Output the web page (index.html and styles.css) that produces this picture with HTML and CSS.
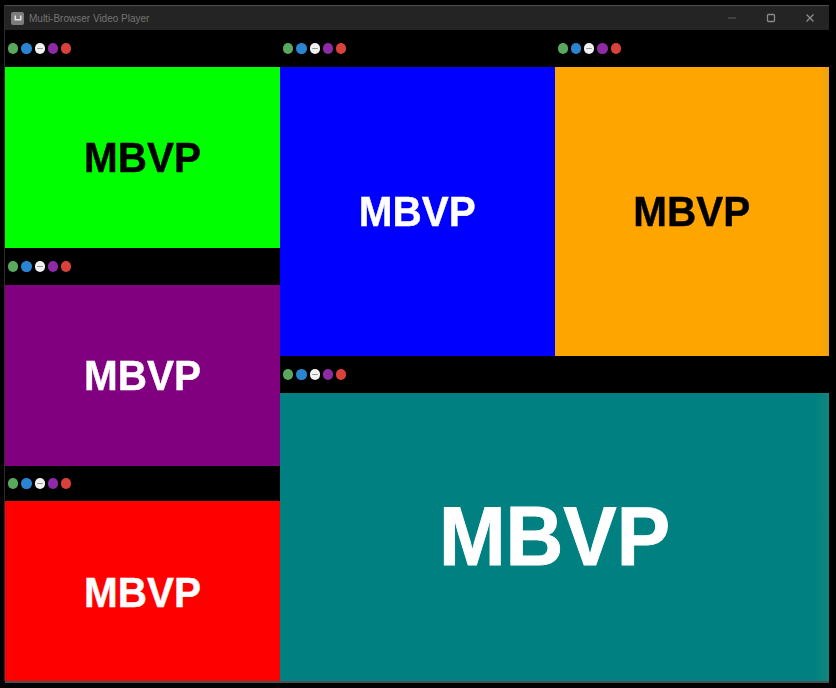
FILE: index.html
```html
<!DOCTYPE html>
<html lang="en">
<head>
<meta charset="utf-8">
<title>Multi-Browser Video Player</title>
<link rel="stylesheet" href="styles.css">
</head>
<body>
<div class="window">
  <header class="titlebar">
    <span class="app-icon"><svg width="12" height="12" viewBox="0 0 12 12"><path d="M2.500 3.500v5h7v-5H8v3.500H4V3.500z" fill="#e4e4e4"/></svg></span>
    <span class="app-title">Multi-Browser Video Player</span>
    <div class="win-controls">
      <svg class="win-btn" width="10" height="10" viewBox="0 0 10 10"><path d="M1 5h8" stroke="#5f5f5f" fill="none"/></svg>
      <svg class="win-btn" width="10" height="10" viewBox="0 0 10 10"><rect x="1.500" y="1.500" width="7" height="7" rx="1" stroke="#8a8a8a" stroke-width="1.300" fill="none"/></svg>
      <svg class="win-btn" width="10" height="10" viewBox="0 0 10 10"><path d="M1.500 1.500l7 7M8.500 1.500l-7 7" stroke="#8a8a8a" stroke-width="1.400" fill="none"/></svg>
    </div>
  </header>
  <main class="workspace">
    <section class="column-left">
      <article class="panel panel-a">
        <div class="bar"><i class="dot green"></i><i class="dot blue"></i><i class="dot white"></i><i class="dot purple"></i><i class="dot red"></i></div>
        <div class="video bg-green"><span class="logo dark">MBVP</span></div>
      </article>
      <article class="panel panel-a">
        <div class="bar"><i class="dot green"></i><i class="dot blue"></i><i class="dot white"></i><i class="dot purple"></i><i class="dot red"></i></div>
        <div class="video bg-purple"><span class="logo">MBVP</span></div>
      </article>
      <article class="panel panel-b">
        <div class="bar bar-short"><i class="dot green"></i><i class="dot blue"></i><i class="dot white"></i><i class="dot purple"></i><i class="dot red"></i></div>
        <div class="video bg-red"><span class="logo">MBVP</span></div>
      </article>
    </section>
    <section class="column-right">
      <div class="top-row">
        <article class="panel panel-half">
          <div class="bar"><i class="dot green"></i><i class="dot blue"></i><i class="dot white"></i><i class="dot purple"></i><i class="dot red"></i></div>
          <div class="video bg-blue"><span class="logo">MBVP</span></div>
        </article>
        <article class="panel panel-half">
          <div class="bar"><i class="dot green"></i><i class="dot blue"></i><i class="dot white"></i><i class="dot purple"></i><i class="dot red"></i></div>
          <div class="video bg-orange"><span class="logo dark">MBVP</span></div>
        </article>
      </div>
      <article class="panel panel-wide">
        <div class="bar"><i class="dot green"></i><i class="dot blue"></i><i class="dot white"></i><i class="dot purple"></i><i class="dot red"></i></div>
        <div class="video bg-teal"><span class="logo logo-large">MBVP</span></div>
      </article>
    </section>
  </main>
</div>
</body>
</html>
```
FILE: styles.css
```css
* { box-sizing: border-box; }
html, body { margin: 0; height: 100%; background: #000; overflow: hidden; }
body { padding: 5px 7px 4px 5px; font-family: "Liberation Sans", Arial, sans-serif; }

.window {
  width: 824px;
  height: 676px;
  display: flex;
  flex-direction: column;
  background: #000;
  filter: blur(0.6px);
  box-shadow: 0 2px 0 #4a4f50, -1px 0 0 #2c2c2c;
}

.titlebar {
  height: 25px;
  flex: none;
  display: flex;
  align-items: center;
  padding-left: 6px;
  background: #242424;
  border-top: 1px solid #4e4e4e;
}
.app-icon {
  width: 13px;
  height: 13px;
  display: flex;
  align-items: center;
  justify-content: center;
  background: #7c7c7c;
  border-radius: 2px;
}
.app-title { margin-left: 5px; font-size: 10px; color: #747474; }
.win-controls { margin-left: auto; display: flex; gap: 29px; padding-right: 14px; }

.workspace { flex: 1; min-height: 0; display: flex; }
.column-left { width: 275px; flex: none; display: flex; flex-direction: column; }
.column-right { flex: 1; min-width: 0; display: flex; flex-direction: column; }
.top-row { height: 326px; flex: none; display: flex; }

.panel { display: flex; flex-direction: column; min-width: 0; }
.panel-a { height: 218px; flex: none; }
.panel-b { height: 215px; flex: none; }
.panel-half { width: 50%; }
.panel-wide { height: 325px; flex: none; }

.bar {
  height: 37px;
  flex: none;
  display: flex;
  align-items: center;
  gap: 3px;
  padding: 0 3px;
  background: #000;
}
.bar-short { height: 35px; }

.dot { position: relative; width: 10.3px; height: 10.3px; border-radius: 50%; flex: none; }
.green { background: #59a85d; }
.blue { background: #2a84d2; }
.white { background: #f2f2f2; }
.white::after { content: ""; position: absolute; left: 2px; right: 2px; top: 4.500px; height: 1.500px; background: #999; border-radius: 1px; }
.purple { background: #8e2aa6; }
.red { background: #d9423a; }

.video { flex: 1; min-height: 0; display: flex; align-items: center; justify-content: center; }
.bg-green { background: #00ff00; }
.bg-purple { background: #800080; }
.bg-red { background: #ff0000; padding-top: 2px; }
.bg-blue { background: #0000ff; }
.bg-orange { background: linear-gradient(to right, #ffa500 97%, #eca212 100%); }
.bg-teal { background: linear-gradient(to right, #008080 97%, #108680 100%); }

.logo { display: inline-block; font-size: 40.5px; font-weight: 700; color: #fff; line-height: 1; transform: scaleY(1.04); -webkit-text-stroke: 0.4px currentColor; }
.logo.dark { color: #000; }
.logo-large { font-size: 80px; -webkit-text-stroke-width: 0.9px; }
```
